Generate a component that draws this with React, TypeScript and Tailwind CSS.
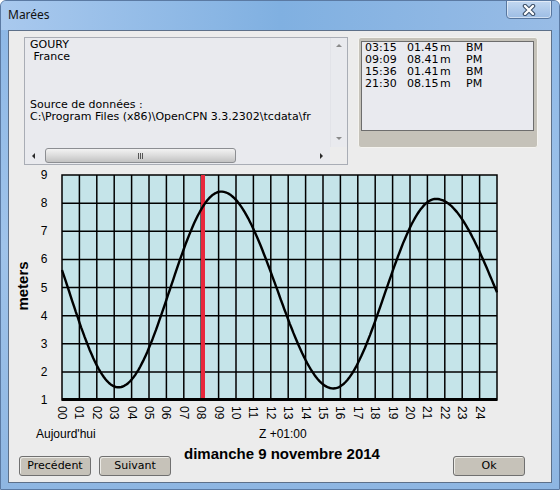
import React from "react";

const X0 = 62;
const X1 = 497;
const Y_TOP = 175;
const Y_BOT = 400;
const PX_H = (X1 - X0) / 25;
const PX_M = (Y_BOT - Y_TOP) / 8;

// tide extrema (hour, height) incl. extrapolated ones outside the day
const EXTREMA: [number, number][] = [
  [-2.45, 8.3],
  [3.25, 1.45],
  [9.15, 8.41],
  [15.6, 1.41],
  [21.5, 8.15],
  [28.5, 1.5],
];

const TIDES = [
  ["03:15", "01.45", "m", "BM"],
  ["09:09", "08.41", "m", "PM"],
  ["15:36", "01.41", "m", "BM"],
  ["21:30", "08.15", "m", "PM"],
];

function heightAt(t: number) {
  let i = 0;
  while (i < EXTREMA.length - 2 && t > EXTREMA[i + 1][0]) i++;
  const [t1, h1] = EXTREMA[i];
  const [t2, h2] = EXTREMA[i + 1];
  const p = (t - t1) / (t2 - t1);
  return (h1 + h2) / 2 + ((h1 - h2) / 2) * Math.cos(Math.PI * p);
}

const xOf = (t: number) => X0 + t * PX_H;
const yOf = (h: number) => Y_TOP + (9 - h) * PX_M;

function curvePath() {
  const pts: string[] = [];
  for (let t = 0; t <= 25.0001; t += 0.1) {
    pts.push(`${xOf(t).toFixed(1)},${yOf(heightAt(t)).toFixed(1)}`);
  }
  return "M" + pts.join(" L");
}

function Arrow({ dir, light }: { dir: "up" | "down" | "left" | "right"; light?: boolean }) {
  const pts = {
    up: "1,5 4,2 7,5",
    down: "1,2 4,5 7,2",
    left: "5,1 2,4 5,7",
    right: "2,1 5,4 2,7",
  }[dir];
  return (
    <svg width="8" height="8" viewBox="0 0 8 8">
      <polygon points={pts} fill={light ? "#8a8a8a" : "#2a2a2a"} />
    </svg>
  );
}

function Chart() {
  const path = curvePath();
  return (
    <svg width="542" height="262" viewBox="9 165 542 262" className="block">
      <rect x={X0} y={Y_TOP} width={X1 - X0} height={Y_BOT - Y_TOP} fill="#c5e4e9" />
      {Array.from({ length: 24 }, (_, i) => i + 1).map((t) => (
        <line key={t} x1={xOf(t)} x2={xOf(t)} y1={Y_TOP} y2={Y_BOT} stroke="#000" strokeWidth={1.5} />
      ))}
      {[2, 3, 4, 5, 6, 7, 8].map((h) => (
        <line key={h} x1={X0} x2={X1} y1={yOf(h)} y2={yOf(h)} stroke="#000" strokeWidth={1.5} />
      ))}
      <rect x={X0} y={Y_TOP} width={X1 - X0} height={Y_BOT - Y_TOP} fill="none" stroke="#000" strokeWidth={1.5} />
      <line x1={X0} x2={X1} y1={Y_BOT - 0.5} y2={Y_BOT - 0.5} stroke="#000" strokeWidth={3} />
      <rect x={201} y={Y_TOP} width={4} height={Y_BOT - Y_TOP - 2} fill="#e8283c" />
      <path d={path} fill="none" stroke="#000" strokeWidth={2.4} strokeLinejoin="round" />

      <g fontFamily="'Liberation Sans', Arial, sans-serif" fontSize="12" fill="#000">
        {[9, 8, 7, 6, 5, 4, 3, 2, 1].map((h) => (
          <text key={h} x={44} y={yOf(h)} textAnchor="middle" dominantBaseline="central">
            {h}
          </text>
        ))}
        {Array.from({ length: 25 }, (_, i) => i).map((t) => (
          <text
            key={t}
            transform={`translate(${xOf(t)},406) rotate(90)`}
            dominantBaseline="central"
          >
            {String(t).padStart(2, "0")}
          </text>
        ))}
      </g>
      <text
        transform="translate(22.5,286) rotate(-90)"
        textAnchor="middle"
        dominantBaseline="central"
        fontFamily="'Liberation Sans', Arial, sans-serif"
        fontSize="15"
        fontWeight="bold"
      >
        meters
      </text>
    </svg>
  );
}

function WinButton({ label, className }: { label: string; className?: string }) {
  return (
    <div
      className={`h-[20px] w-[72px] rounded-[3px] border border-[#707070] bg-[#c6c2b9] shadow-[inset_1px_1px_0_#ecebe6] flex items-center justify-center text-[11px] text-black ${className ?? ""}`}
    >
      {label}
    </div>
  );
}

export default function App() {
  return (
    <div
      className="relative w-[560px] h-[490px] rounded-t-[6px] border border-[#5b7aa3] bg-gradient-to-b from-[#8cb7e6] via-[#9fc3ea] to-[#8eb6e2] flex flex-col overflow-hidden"
      style={{ fontFamily: "'DejaVu Sans', Verdana, sans-serif" }}
    >
      {/* title bar */}
      <div className="h-[29px] flex items-start bg-gradient-to-r from-[#a9c9ee] via-[#80b0e1] to-[#98bce6]">
        <span
          className="mt-[5px] ml-[7px] text-[12px] text-[#111]"
          style={{ fontFamily: "'Noto Sans', 'Open Sans', sans-serif" }}
        >
          Marées
        </span>
        <div className="ml-auto mr-[7px] w-[46px] h-[19px] -mt-px rounded-b-[4px] border border-[#58779f] bg-gradient-to-b from-[#c3d8f1] to-[#9dbde4] shadow-[inset_0_0_0_1px_rgba(255,255,255,0.5)] flex items-center justify-center">
          <svg width="14" height="12" viewBox="0 0 14 12">
            <path d="M3 2 L11 10 M11 2 L3 10" stroke="#3b4e66" strokeWidth="4.5" strokeLinecap="round" />
            <path d="M3 2 L11 10 M11 2 L3 10" stroke="#fff" strokeWidth="2.4" strokeLinecap="round" />
          </svg>
        </div>
      </div>

      {/* client area */}
      <div className="mx-[7px] h-[453px] border border-[#5d7089] bg-[#ececec] flex flex-col">
        <div className="flex pt-[6px] pl-[15px] gap-[10px] h-[134px]">
          {/* info text box */}
          <div className="w-[324px] h-[128px] border border-[#a9adb5] bg-[#e9eaee] flex flex-col">
            <div className="flex flex-1 min-h-0">
              <div className="flex-1 overflow-hidden whitespace-pre text-[11px] leading-[12px] text-black pl-[5px] pt-px">
                {"GOURY\n France\n\n\n\nSource de données :\nC:\\Program Files (x86)\\OpenCPN 3.3.2302\\tcdata\\fr"}
              </div>
              <div className="w-[17px] border-l border-[#e2e3e8] flex flex-col items-center justify-between py-[4px]">
                <Arrow dir="up" light />
                <Arrow dir="down" light />
              </div>
            </div>
            <div className="h-[17px] flex">
              <div className="flex-1 flex items-center">
                <div className="w-[17px] flex justify-center">
                  <Arrow dir="left" />
                </div>
                <div className="ml-[3px] w-[191px] h-[15px] rounded-[3px] border border-[#8c8e92] bg-gradient-to-b from-[#f3f3f3] via-[#dcdcdc] to-[#c2c2c2] flex items-center justify-center">
                  <div className="flex gap-[1px]">
                    <div className="w-[1px] h-[6px] bg-[#555]" />
                    <div className="w-[1px] h-[6px] bg-[#555]" />
                    <div className="w-[1px] h-[6px] bg-[#555]" />
                  </div>
                </div>
                <div className="ml-auto w-[17px] flex justify-center">
                  <Arrow dir="right" />
                </div>
              </div>
              <div className="w-[17px] bg-[#ececec]" />
            </div>
          </div>

          {/* tide list */}
          <div className="w-[180px] h-[111px] rounded-[3px] border border-[#f4f3ef] bg-[#c5c2b9] pl-[2px] pt-[3px] pr-[3px]">
            <div className="h-[90px] border border-[#6d6d6d] bg-[#e9eaef] pl-[3px] text-[11px] leading-[12px] text-black">
              {TIDES.map((r) => (
                <div key={r[0]} className="flex">
                  <span className="w-[42px]">{r[0]}</span>
                  <span className="w-[33px]">{r[1]}</span>
                  <span className="w-[26px]">{r[2]}</span>
                  <span>{r[3]}</span>
                </div>
              ))}
            </div>
          </div>
        </div>

        <Chart />

        <div
          className="h-[14px] flex items-center pl-[27px] text-[12px] leading-[14px] text-black"
          style={{ fontFamily: "'Liberation Sans', Arial, sans-serif" }}
        >
          <span className="w-[223px]">Aujourd'hui</span>
          <span>Z +01:00</span>
        </div>

        <div className="flex items-start">
          <WinButton label="Precédent" className="ml-[10px] mt-[15px]" />
          <WinButton label="Suivant" className="ml-[8px] mt-[15px]" />
          <span
            className="ml-[13px] mt-[4px] text-[15px] leading-[18px] font-bold text-black"
            style={{ fontFamily: "'Liberation Sans', Arial, sans-serif" }}
          >
            dimanche 9 novembre 2014
          </span>
          <WinButton label="Ok" className="ml-auto mr-[26px] mt-[15px]" />
        </div>
      </div>
    </div>
  );
}
